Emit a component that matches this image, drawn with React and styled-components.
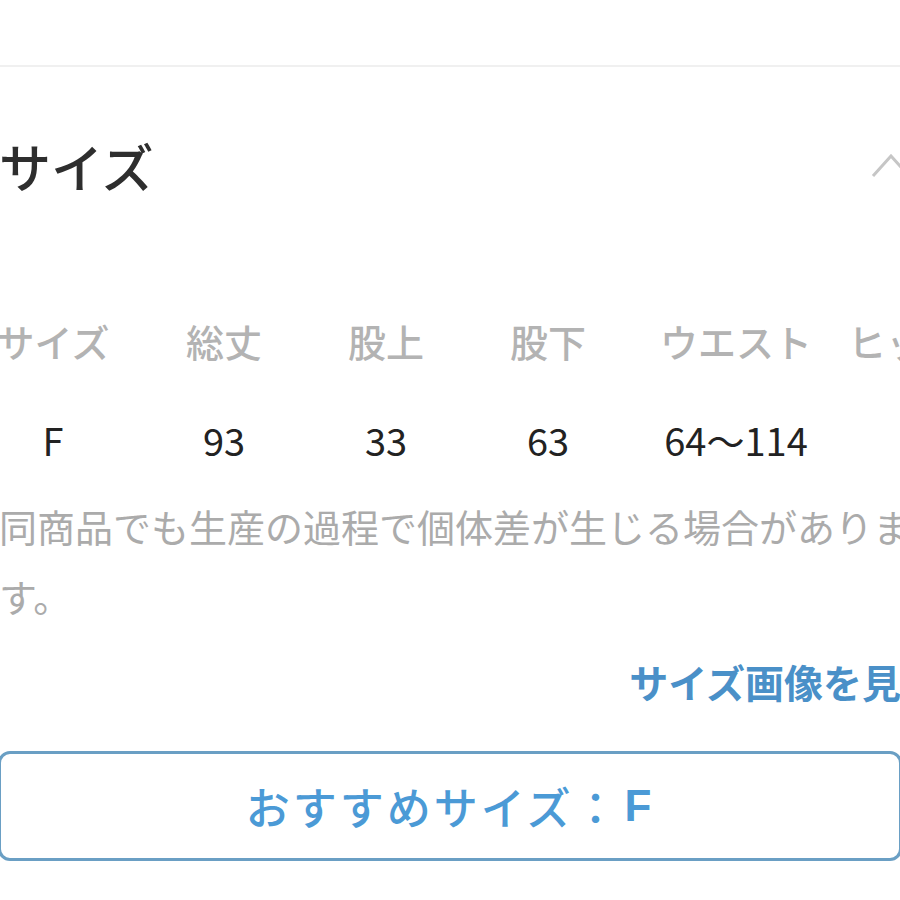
import React from 'react';
import styled, { createGlobalStyle } from 'styled-components';

const Global = createGlobalStyle`
  html, body {
    margin: 0;
    padding: 0;
    background: #ffffff;
    overflow: hidden;
  }
  body {
    font-family: "Noto Sans CJK JP", "Noto Sans", sans-serif;
  }
`

const Page = styled.div`
  width: 900px;
  height: 900px;
  overflow: hidden;
  padding-top: 65px;
  box-sizing: border-box;
`

const Divider = styled.div`
  height: 2px;
  background-color: #f0f0f0;
`

const Section = styled.div`
  width: 941px;
  margin-left: -1px;
  padding-top: 73px;
`

const TitleRow = styled.div`
  display: flex;
  align-items: center;
  justify-content: space-between;
  height: 52px;
`

const Title = styled.h2`
  margin: 0;
  font-size: 52px;
  line-height: 1;
  font-weight: 500;
  color: #2e2e2e;
`

const Chevron = styled.svg`
  width: 40px;
  height: 24px;
  margin-right: 29px;
`

const Table = styled.div`
  display: grid;
  grid-template-columns: 170px 172px 152px 172px 204px 134px;
  margin-left: -31px;
  margin-top: 130px;
  row-gap: 61px;
`

const Cell = styled.div`
  text-align: center;
  white-space: nowrap;
  font-size: 38px;
  line-height: 1;
  color: ${p => (p.head ? '#b3b3b3' : '#222222')};
  font-weight: ${p => (p.head ? 500 : 400)};
`

const Note = styled.p`
  margin: 32px 0 0 0;
  font-size: 38px;
  line-height: 70px;
  color: #ababab;
`

const LinkRow = styled.div`
  display: flex;
  justify-content: flex-end;
  margin-top: 31px;
`

const SizeLink = styled.a`
  font-size: 39px;
  line-height: 1;
  font-weight: 600;
  color: #4a90c8;
  text-decoration: none;
`

const Recommend = styled.button`
  display: flex;
  align-items: center;
  justify-content: center;
  width: 904px;
  height: 110px;
  margin: 50px 0 0 -1px;
  padding: 0;
  background: #ffffff;
  border: 3px solid #6a9fc4;
  border-radius: 12px;
  font-family: "Noto Sans CJK JP", "Noto Sans", sans-serif;
  font-size: 44px;
  letter-spacing: 3px;
  font-weight: 500;
  color: #4b9ad6;
`

const Bold = styled.span`
  font-family: "Liberation Sans", "Noto Sans", sans-serif;
  font-weight: 700;
  margin-left: 4px;
`

const heads = ['サイズ', '総丈', '股上', '股下', 'ウエスト', 'ヒップ']
const values = ['F', '93', '33', '63', '64〜114', '']

export default function App() {
  return (
    <Page>
      <Global />
      <Divider />
      <Section>
        <TitleRow>
          <Title>サイズ</Title>
          <Chevron viewBox="0 0 40 24">
            <path d="M2 22 L20 2 L38 22" fill="none" stroke="#c6c6c6" strokeWidth="3" />
          </Chevron>
        </TitleRow>
        <Table>
          {heads.map(h => (
            <Cell head key={h}>{h}</Cell>
          ))}
          {values.map((v, i) => (
            <Cell key={i}>{v}</Cell>
          ))}
        </Table>
        <Note>同商品でも生産の過程で個体差が生じる場合があります。</Note>
        <LinkRow>
          <SizeLink>サイズ画像を見る</SizeLink>
        </LinkRow>
        <Recommend>
          おすすめサイズ：<Bold>F</Bold>
        </Recommend>
      </Section>
    </Page>
  );
}
